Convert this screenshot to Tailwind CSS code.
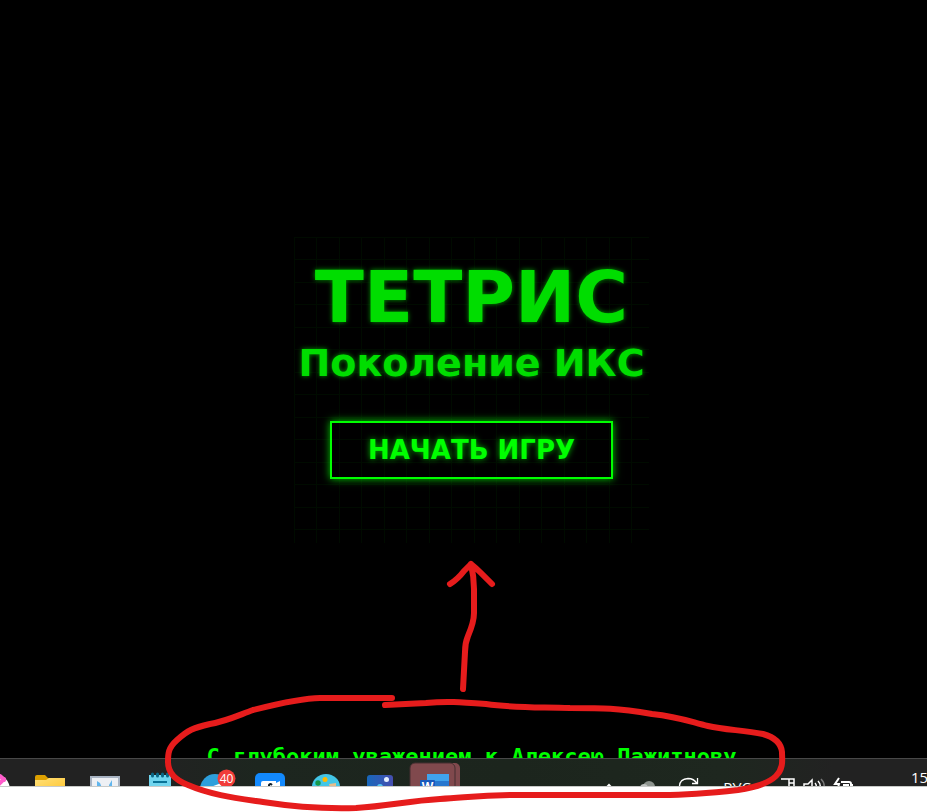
<!DOCTYPE html>
<html lang="ru">
<head>
<meta charset="utf-8">
<meta name="viewport" content="width=device-width, initial-scale=1">
<title>Тетрис: Поколение ИКС</title>
<script src="https://cdn.jsdelivr.net/npm/@tailwindcss/browser@4"></script>
</head>
<body class="relative flex h-screen flex-col overflow-hidden bg-white font-['DejaVu_Sans',sans-serif]">

<main class="flex min-h-0 flex-1 flex-col overflow-hidden bg-black pl-4 text-[#00ff00]">
  <div class="flex flex-1 flex-col items-center justify-center pt-[34px]">
    <section class="flex flex-col items-center bg-[linear-gradient(#000b00_1px,transparent_1px_22px,#000b00_22px_23px,transparent_23px),linear-gradient(90deg,#000b00_1px,transparent_1px_22px,#000b00_22px_23px,transparent_23px)] bg-[size:45px_45px] px-1 pt-6 pb-16">
      <h1 class="text-[72px] leading-[72px] font-bold text-[#00dd00] [text-shadow:0_0_5px_#009900]">ТЕТРИС</h1>
      <h2 class="mt-2 text-[38px] leading-[44px] font-bold whitespace-nowrap text-[#00dd00] [text-shadow:0_0_5px_#009900]">Поколение ИКС</h2>
      <button type="button" class="mt-9 border-2 border-[#00ff00] px-9 py-[11px] text-[26px] leading-8 font-bold whitespace-nowrap shadow-[0_0_8px_#00cc00] [text-shadow:0_0_6px_#00bb00]">НАЧАТЬ ИГРУ</button>
    </section>
  </div>
  <p class="h-3 overflow-hidden text-center font-['DejaVu_Sans_Mono',monospace] text-[22px] leading-[22px] font-bold whitespace-nowrap">С глубоким уважением к Алексею Пажитнову</p>
</main>

<nav aria-label="Панель задач" class="flex h-7 shrink-0 overflow-hidden border-t border-[#484848] bg-[linear-gradient(90deg,#222222_0%,#222222_16%,#1d261f_28%,#1c251d_55%,#1e271f_78%,#222222_90%)] text-white">
  <div class="-ml-8 flex shrink-0">
    <button type="button" aria-label="Приложение" class="w-[55px]">
      <svg width="55" height="27" viewBox="0 0 55 27"><circle cx="25" cy="31" r="17" fill="#fff"/><path d="M30 26l6-6M32 17l4 4" stroke="#ff5ccb" stroke-width="4" stroke-linecap="round"/></svg>
    </button>
    <button type="button" aria-label="Проводник" class="w-[55px]">
      <svg width="55" height="27" viewBox="0 0 55 27"><defs><linearGradient id="fold" x1="0" y1="0" x2="1" y2="1"><stop stop-color="#ffe07a"/><stop offset="1" stop-color="#ffc52f"/></linearGradient></defs><path d="M12 18q0-2 2-2h8l3 3h17v10H12z" fill="#dda000"/><path d="M12 21h11l3-2h16v14H12z" fill="url(#fold)"/></svg>
    </button>
    <button type="button" aria-label="Диаграммы" class="w-[55px]">
      <svg width="55" height="27" viewBox="0 0 55 27"><path d="M12 17h30v14H12z" fill="#a9b4c3"/><path d="M14 19h26v12H14z" fill="#eef0f4"/><path d="M19 22l3 2 2 5h-5zM34 21l-3 5v3h3z" fill="#60b5ed"/></svg>
    </button>
    <button type="button" aria-label="Блокнот" class="w-[55px]">
      <svg width="55" height="27" viewBox="0 0 55 27"><path d="M16 16h22v14H16z" fill="#70d5ef"/><path d="M20 23h14" stroke="#087398" stroke-width="2"/><path d="M19.500 15v2M24.500 15v2M29.500 15v2M34.500 15v2" stroke="#0a6887" stroke-width="3" stroke-linecap="round"/></svg>
    </button>
    <button type="button" aria-label="Telegram, 40 сообщений" class="w-[55px]">
      <svg width="55" height="27" viewBox="0 0 55 27"><circle cx="27" cy="30" r="15" fill="#2d9fdc"/><path d="M20 29l16-6v8H20z" fill="#fff"/><circle cx="38.500" cy="19.500" r="9" fill="#f13c38"/><text x="38.500" y="24" text-anchor="middle" font-family="Open Sans, sans-serif" font-size="12" fill="#fff">40</text></svg>
    </button>
    <button type="button" aria-label="Камера" class="w-[55px]">
      <svg width="55" height="27" viewBox="0 0 55 27"><rect x="12" y="14" width="30" height="30" rx="5" fill="#1289fd"/><path d="M18 24q0-2 2-2h13v2l4-2v8H18z" fill="#fff"/><path d="M26 27v-1q1-2 3 0" fill="none" stroke="#10202c" stroke-width="2"/></svg>
    </button>
    <button type="button" aria-label="Paint" class="w-[55px]">
      <svg width="55" height="27" viewBox="0 0 55 27"><ellipse cx="28" cy="28" rx="14" ry="13" fill="#42c6e7"/><circle cx="27" cy="20.500" r="2.500" fill="#ffb900"/><circle cx="20" cy="24" r="2.700" fill="#15984a"/><path d="M31 25l7-1v5h-6z" fill="#e5bd8c"/></svg>
    </button>
    <button type="button" aria-label="Фотографии" class="w-[55px]">
      <svg width="55" height="27" viewBox="0 0 55 27"><defs><linearGradient id="photo"><stop stop-color="#1767bb"/><stop offset="1" stop-color="#464eb0"/></linearGradient></defs><rect x="14" y="16" width="26" height="26" rx="3" fill="url(#photo)"/><circle cx="33.500" cy="20.500" r="2.500" fill="#e4efff"/><circle cx="27" cy="28" r="3" fill="#55c8f1"/></svg>
    </button>
    <button type="button" aria-label="Word" class="w-[55px]">
      <svg width="55" height="27" viewBox="0 0 55 27"><rect x="12" y="4" width="40" height="35" rx="5" fill="#80494d"/><rect x="2" y="4" width="45" height="35" rx="5" fill="#80494d" stroke="#442f30" stroke-width="1"/><path d="M19 15h22v7H19z" fill="#40a3ed"/><path d="M19 22h22v8H19z" fill="#2777cf"/><rect x="12" y="21" width="15" height="15" rx="1" fill="#185abd"/><text x="19.500" y="32" text-anchor="middle" font-family="Open Sans, sans-serif" font-weight="bold" font-size="12" fill="#fff">W</text></svg>
    </button>
  </div>
  <div class="ml-auto flex shrink-0 font-['Open_Sans',sans-serif] text-[15px] leading-5">
    <button type="button" aria-label="Скрытые значки" class="w-10"><svg width="40" height="27" viewBox="0 0 40 27"><path d="M15 31l5-5 5 5" fill="none" stroke="#fff" stroke-width="2"/></svg></button>
    <button type="button" aria-label="OneDrive" class="w-10"><svg width="40" height="27" viewBox="0 0 40 27"><circle cx="20" cy="28" r="6" fill="#8d948e"/><circle cx="15" cy="29" r="4" fill="#bfc3c0"/></svg></button>
    <button type="button" aria-label="Обновление" class="w-10"><svg width="40" height="27" viewBox="0 0 40 27"><path d="M10.500 29Q10 20 19 19.500q6 0 9 5M28.500 19v5.500H23" fill="none" stroke="#fff" stroke-width="1.300"/></svg></button>
    <button type="button" class="flex w-14 justify-center pt-[18px]">РУС</button>
    <button type="button" aria-label="Сеть, звук и батарея" class="w-[106px]"><svg width="106" height="27" viewBox="0 0 106 27" fill="none" stroke="#fff" stroke-width="1.500"><path d="M16 20h8M24 20h5v9h-5zM24 24h5"/><path d="M39 29v-4h4l4-4v8"/><path d="M50 24q2 2 1 5M53 22q3 3 2 7"/><path d="M56 20q4 4 3 9" stroke="#777"/><path d="M74 19l-4 6h4l-1 4M76 23h8q2 0 2 2v4M78 26h6M87 25v3" stroke-width="2"/></svg></button>
    <time class="w-14 pt-2 pl-10">15</time>
  </div>
</nav>
<div class="h-[26px] shrink-0 border-t border-[#c8cac8] bg-white"></div>

<!-- Hand-drawn markup above the desktop -->
<svg aria-hidden="true" class="pointer-events-none absolute inset-0 h-full w-full" viewBox="0 0 927 812" fill="none" stroke="#e61c1c" stroke-width="6" stroke-linecap="round" stroke-linejoin="round">
  <path d="M463 689L465 652Q465 643 468 636Q474 622 474 613L474 589Q474 577 471 564M450 584Q458 579 464 571Q468 567 471 564Q476 568 481 573L492 584"/>
  <path d="M392 698H320C304 698 277 704 253 710C239 715 227 721 210 724C193 728 188 730 177 740C168 748 168 754 168 762C168 773 175 780 188 785C211 795 236 798 263 802C295 807 324 809 356 808C389 806 407 801 440 799C472 797 483 795 519 795H662C688 795 711 793 738 790C758 787 770 782 776 776C784 768 782 759 782 752C781 743 774 737 763 734C743 730 725 730 708 726C691 722 680 717 652 714C616 708 604 708 570 708C535 707 515 708 486 704C460 702 446 701 426 703L385 705"/>
</svg>
</body>
</html>
